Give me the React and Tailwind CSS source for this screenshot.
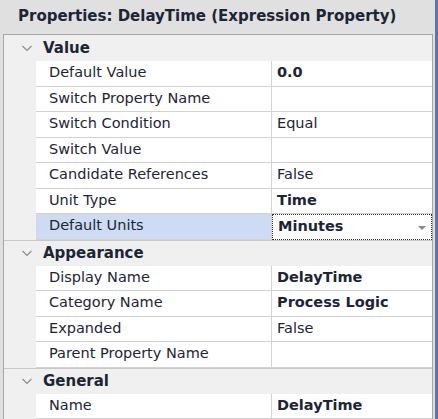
import React from 'react';

const font = { fontFamily: '"DejaVu Sans", Verdana, sans-serif' };

const groups = [
  {
    name: 'Value',
    rows: [
      { k: 'Default Value', v: '0.0', bold: true },
      { k: 'Switch Property Name', v: '' },
      { k: 'Switch Condition', v: 'Equal' },
      { k: 'Switch Value', v: '' },
      { k: 'Candidate References', v: 'False' },
      { k: 'Unit Type', v: 'Time', bold: true },
      { k: 'Default Units', v: 'Minutes', bold: true, selected: true },
    ],
  },
  {
    name: 'Appearance',
    rows: [
      { k: 'Display Name', v: 'DelayTime', bold: true },
      { k: 'Category Name', v: 'Process Logic', bold: true },
      { k: 'Expanded', v: 'False' },
      { k: 'Parent Property Name', v: '' },
    ],
  },
  {
    name: 'General',
    rows: [{ k: 'Name', v: 'DelayTime', bold: true }],
  },
];

function Chevron() {
  return (
    <svg width="12" height="7" viewBox="0 0 12 7" className="shrink-0">
      <path d="M1.5 1 L6 5.5 L10.5 1" fill="none" stroke="#8c8c8c" strokeWidth="1.2" />
    </svg>
  );
}

function Row({ r }) {
  return (
    <div className="flex h-[25.5px]">
      <div className="w-[32px] shrink-0 bg-[#f0f0f0]" />
      <div
        className={
          'w-[236px] shrink-0 flex items-center pl-[13px] border-b border-r border-[#d3d3d3] text-[14.5px] text-[#1c2536] ' +
          (r.selected ? 'bg-[#cddcf3]' : 'bg-white')
        }
      >
        {r.k}
      </div>
      {r.selected ? (
        <div className="flex-1 relative flex items-center pl-[5px] bg-white border border-dotted border-[#333] text-[14.5px] font-bold text-[#1c2536]">
          {r.v}
          <svg width="8" height="5" viewBox="0 0 8 5" className="absolute right-[5px] top-[11px]">
            <path d="M0 0 L8 0 L4 4 Z" fill="#8a8a8a" />
          </svg>
        </div>
      ) : (
        <div
          className={
            'flex-1 flex items-center pl-[5px] bg-white border-b border-[#d3d3d3] text-[14.5px] text-[#1c2536] ' +
            (r.bold ? 'font-bold' : '')
          }
        >
          {r.v}
        </div>
      )}
    </div>
  );
}

export default function App() {
  return (
    <div className="w-[438px] h-[419px] overflow-hidden flex bg-[#e0e0e0]" style={font}>
      <div className="flex-1 flex flex-col">
        <div className="h-[34px] shrink-0 flex items-center pl-[18px] pb-[1px] text-[15px] font-bold text-[#1c2536]">
          Properties: DelayTime (Expression Property)
        </div>
        <div className="ml-[3px] mr-[2px] flex-1 border-t border-l border-r border-[#a6a6a6] bg-[#f0f0f0]">
          {groups.map((g, gi) => (
            <div key={g.name}>
              <div
                className={
                  'h-[26px] flex items-center bg-[#f0f0f0] pl-[17px] gap-[10px] ' +
                  (gi > 0 ? 'border-t border-[#c8c8c8]' : '')
                }
              >
                <Chevron />
                <span className="text-[15px] font-bold text-[#1c2536]">{g.name}</span>
              </div>
              {g.rows.map((r) => (
                <Row key={r.k} r={r} />
              ))}
            </div>
          ))}
        </div>
      </div>
      <div className="w-[3px] bg-[#5a78ad]" />
    </div>
  );
}
